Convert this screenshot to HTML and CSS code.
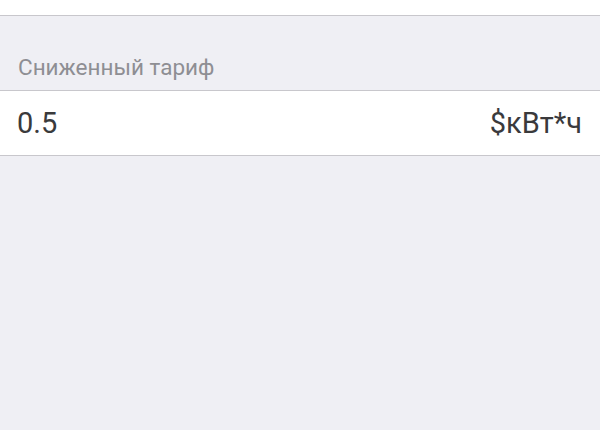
FILE: index.html
```html
<!DOCTYPE html>
<html lang="ru">
<head>
    <meta charset="UTF-8">
    <title>Тариф</title>
    <link rel="stylesheet" href="styles.css">
</head>
<body>
<div class="page">
    <div class="top_cell"></div>
    <div class="section_head">Сниженный тариф</div>
    <div class="row">
        <span class="row_value">0.5</span>
        <span class="row_unit">$кВт*ч</span>
    </div>
</div>
</body>
</html>
```
FILE: styles.css
```css
body {
    margin: 0;
    background-color: #efeff4;
    font-family: Roboto, "Noto Sans", sans-serif;
}

.page {
    width: 600px;
    height: 430px;
    overflow: hidden;
}

.top_cell {
    height: 15px;
    background-color: #ffffff;
    border-bottom: 1px solid #c8c7cc;
}

.section_head {
    padding: 39px 18px 0 18px;
    height: 35px;
    font-size: 22.5px;
    line-height: 24px;
    color: #8e8e93;
}

.row {
    height: 64px;
    background-color: #ffffff;
    border-top: 1px solid #c8c7cc;
    border-bottom: 1px solid #c8c7cc;
    display: flex;
    align-items: center;
    justify-content: space-between;
    padding: 0 18px 0 17px;
    font-size: 29px;
    color: #3a3a3c;
}
```
